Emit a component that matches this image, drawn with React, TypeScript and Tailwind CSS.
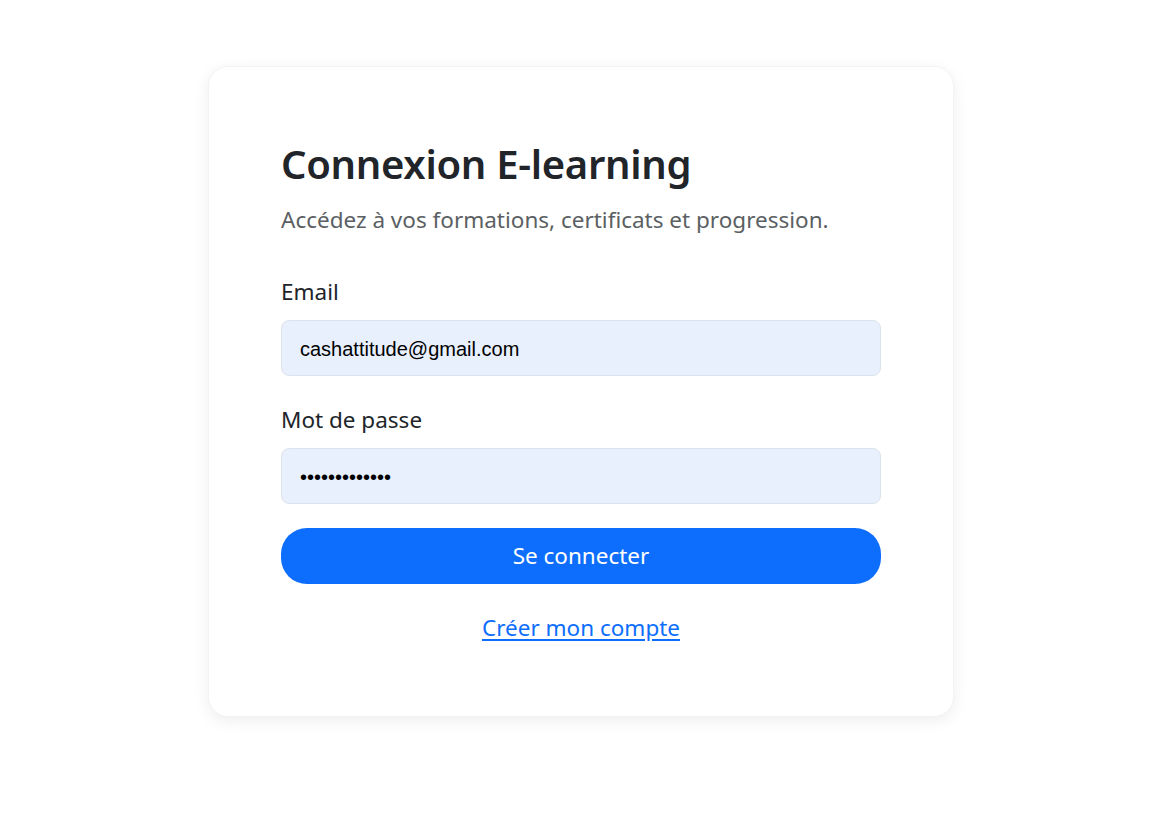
import React, { useState } from 'react';

const App: React.FC = () => {
  const [email, setEmail] = useState('cashattitude@gmail.com');
  const [password, setPassword] = useState('cashattitude1');

  return (
    <div className="min-h-[829px] bg-white flex justify-center pt-[66px] pr-[7px] font-['Noto_Sans',sans-serif] text-[#212529]">
      <div className="w-[746px] h-[651px] bg-white rounded-[20px] shadow-[0_4px_16px_rgba(0,0,0,0.07)] border border-[#f3f3f3] px-[72px] pt-[73px]">
        <h1 className="text-[40px] leading-[47px] font-semibold tracking-[-0.3px]">Connexion E-learning</h1>
        <p className="mt-[18px] text-[22.5px] leading-[30px] text-[#5b5f63]">
          Accédez à vos formations, certificats et progression.
        </p>

        <form className="mt-[42px]" onSubmit={(e) => e.preventDefault()}>
          <label className="block text-[22.5px] leading-[30px] mb-[13px]">Email</label>
          <input
            type="email"
            value={email}
            onChange={(e) => setEmail(e.target.value)}
            className="w-full h-[56px] rounded-[8px] border border-[#dde3ec] bg-[#e8f0fe] px-[18px] pt-[3px] text-[20px] text-black font-['Liberation_Sans',Arial,sans-serif] outline-none"
          />

          <label className="block text-[22.5px] leading-[30px] mt-[29px] mb-[13px]">Mot de passe</label>
          <input
            type="password"
            value={password}
            onChange={(e) => setPassword(e.target.value)}
            className="w-full h-[56px] rounded-[8px] border border-[#dde3ec] bg-[#e8f0fe] px-[18px] pt-[3px] text-[20px] text-black font-['Liberation_Sans',Arial,sans-serif] outline-none"
          />

          <button
            type="submit"
            className="mt-[24px] w-full h-[56px] rounded-[26px] bg-[#0d6efd] text-white text-[22.5px]"
          >
            Se connecter
          </button>

          <div className="mt-[29px] text-center text-[22.5px] leading-[30px]">
            <a href="#" className="text-[#0d6efd] underline underline-offset-[3px]">Créer mon compte</a>
          </div>
        </form>
      </div>
    </div>
  );
};

export default App;
